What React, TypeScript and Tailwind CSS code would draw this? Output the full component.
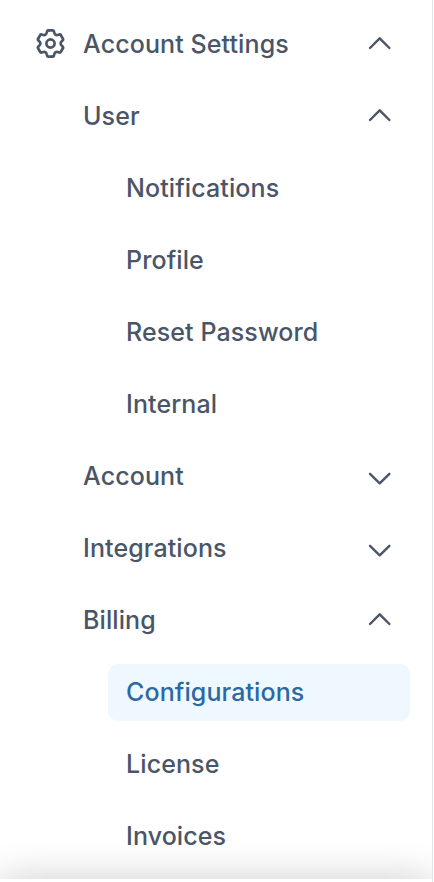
import { useState } from "react";

type Section = {
  label: string;
  items: string[];
};

const sections: Section[] = [
  { label: "User", items: ["Notifications", "Profile", "Reset Password", "Internal"] },
  { label: "Account", items: [] },
  { label: "Integrations", items: [] },
  { label: "Billing", items: ["Configurations", "License", "Invoices"] },
];

// one tooth of the gear and the valley after it, repeated six times
const GearIcon = () => (
  <svg className="mb-0.5 size-8" viewBox="-16.5 -15.5 32 32" fill="none" stroke="currentColor" strokeWidth={2.7} strokeLinecap="round" strokeLinejoin="round">
    {[0, 60, 120, 180, 240, 300].map((angle) => (
      <path
        key={angle}
        transform={`rotate(${angle})`}
        d="M-2 -13.1H2Q3.4 -13.1 3.6 -11.4Q4.25 -7.36 8.07 -8.82Q9.64 -9.5 10.35 -8.28"
      />
    ))}
    <circle r={4.1} />
  </svg>
);

const Chevron = ({ open }: { open: boolean }) => (
  <svg className="size-8" viewBox="0 0 32 32" fill="none" stroke="currentColor" strokeWidth={2.4} strokeLinecap="round" strokeLinejoin="round">
    <path d={open ? "M7 19l9.7-9.7 9.7 9.7" : "M7 12.8l9.7 9.6 9.7-9.6"} />
  </svg>
);

const App = () => {
  const [active, setActive] = useState("Configurations");
  const [open, setOpen] = useState(["User", "Billing"]);
  const [rootOpen, setRootOpen] = useState(true);

  const toggle = (label: string) => {
    setOpen(open.includes(label) ? open.filter((l) => l !== label) : [...open, label]);
  };

  return (
    <div className="flex h-[882px] w-[433px] flex-col overflow-hidden border-r border-[#e2e8f0] bg-white font-['Inter',sans-serif] text-[25px] font-medium tracking-[0.1px] text-[#4a5568] [font-optical-sizing:none]">
      <nav className="flex h-[879px] shrink-0 flex-col gap-[15px] pt-4 pr-[22px]">
        <button className="flex h-[57px] shrink-0 items-center pr-[15px] pl-[34px]" onClick={() => setRootOpen(!rootOpen)}>
          <GearIcon />
          <span className="ml-[17px] flex-1 text-left">Account Settings</span>
          <Chevron open={rootOpen} />
        </button>
        {rootOpen && sections.map(({ label, items }) => (
          <div key={label} className="flex flex-col gap-[15px]">
            <button className="flex h-[57px] shrink-0 items-center pr-[15px] pl-[83px]" onClick={() => toggle(label)}>
              <span className="flex-1 text-left">{label}</span>
              <Chevron open={open.includes(label)} />
            </button>
            {open.includes(label) && items.map((item) => (
              <button
                key={item}
                className={`ml-[108px] h-[57px] shrink-0 rounded-[10px] px-[18px] text-left ${item === active ? "bg-[#f0f8ff] text-[#2a69a4]" : ""}`}
                onClick={() => setActive(item)}
              >
                {item}
              </button>
            ))}
          </div>
        ))}
      </nav>
      {/* footer edge, its shadow falls on the end of the list */}
      <div className="h-[100px] shrink-0 bg-white shadow-[0_0_40px_rgba(0,0,0,0.2)]" />
    </div>
  );
};

export default App;
